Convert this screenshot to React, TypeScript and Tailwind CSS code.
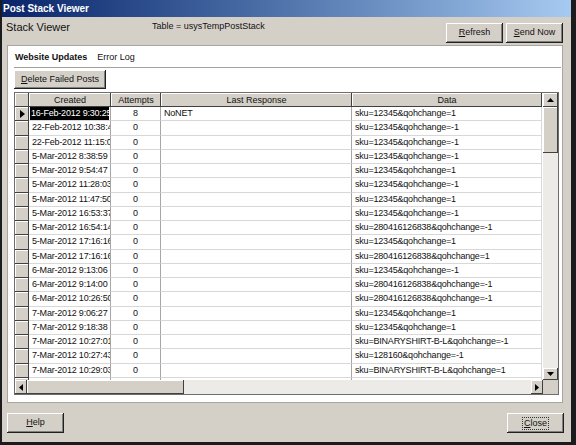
import React from 'react';

const rows = [
  { created: '16-Feb-2012 9:30:25', attempts: '8', response: 'NoNET', data: 'sku=12345&qohchange=1' },
  { created: '22-Feb-2012 10:38:48', attempts: '0', response: '', data: 'sku=12345&qohchange=-1' },
  { created: '22-Feb-2012 11:15:02', attempts: '0', response: '', data: 'sku=12345&qohchange=-1' },
  { created: '5-Mar-2012 8:38:59', attempts: '0', response: '', data: 'sku=12345&qohchange=-1' },
  { created: '5-Mar-2012 9:54:47', attempts: '0', response: '', data: 'sku=12345&qohchange=1' },
  { created: '5-Mar-2012 11:28:03', attempts: '0', response: '', data: 'sku=12345&qohchange=-1' },
  { created: '5-Mar-2012 11:47:50', attempts: '0', response: '', data: 'sku=12345&qohchange=1' },
  { created: '5-Mar-2012 16:53:37', attempts: '0', response: '', data: 'sku=12345&qohchange=-1' },
  { created: '5-Mar-2012 16:54:14', attempts: '0', response: '', data: 'sku=280416126838&qohchange=-1' },
  { created: '5-Mar-2012 17:16:16', attempts: '0', response: '', data: 'sku=12345&qohchange=1' },
  { created: '5-Mar-2012 17:16:16', attempts: '0', response: '', data: 'sku=280416126838&qohchange=1' },
  { created: '6-Mar-2012 9:13:06', attempts: '0', response: '', data: 'sku=12345&qohchange=-1' },
  { created: '6-Mar-2012 9:14:00', attempts: '0', response: '', data: 'sku=280416126838&qohchange=-1' },
  { created: '6-Mar-2012 10:26:50', attempts: '0', response: '', data: 'sku=280416126838&qohchange=-1' },
  { created: '7-Mar-2012 9:06:27', attempts: '0', response: '', data: 'sku=12345&qohchange=1' },
  { created: '7-Mar-2012 9:18:38', attempts: '0', response: '', data: 'sku=12345&qohchange=1' },
  { created: '7-Mar-2012 10:27:01', attempts: '0', response: '', data: 'sku=BINARYSHIRT-B-L&qohchange=-1' },
  { created: '7-Mar-2012 10:27:43', attempts: '0', response: '', data: 'sku=128160&qohchange=-1' },
  { created: '7-Mar-2012 10:29:03', attempts: '0', response: '', data: 'sku=BINARYSHIRT-B-L&qohchange=1' },
  { created: '7-Mar-2012 10:30:35', attempts: '0', response: '', data: 'sku=128160&qohchange=1' },
];

// raised 3d look, windows classic style
const raised =
  'bg-[#d4d0c8] shadow-[inset_-1px_-1px_#202020,inset_1px_1px_#ffffff,inset_-2px_-2px_#808080]';
const thin = 'bg-[#d4d0c8] shadow-[inset_-1px_-1px_#404040,inset_1px_1px_#ffffff]';

const Btn: React.FC<{ label: string; w: string; focus?: boolean }> = ({ label, w, focus }) => (
  <button className={`${raised} ${w} h-[20px] flex items-center justify-center text-[9px] text-[#111]`}>
    <span className={focus ? 'border border-dotted border-[#333] px-[1px] leading-[11px]' : ''}>
      <span className="underline">{label[0]}</span>
      {label.slice(1)}
    </span>
  </button>
);

const Arrow: React.FC<{ dir: 'up' | 'down' | 'left' | 'right' }> = ({ dir }) => {
  const pts = {
    up: '0,4 3.5,0 7,4',
    down: '0,0 3.5,4 7,0',
    left: '4,0 0,3.5 4,7',
    right: '0,0 4,3.5 0,7',
  }[dir];
  const vert = dir === 'up' || dir === 'down';
  return (
    <svg width={vert ? 7 : 4} height={vert ? 4 : 7} viewBox={vert ? '0 0 7 4' : '0 0 4 7'}>
      <polygon points={pts} fill="#000" />
    </svg>
  );
};

const cols = ['w-[14px]', 'w-[82px]', 'w-[50px]', 'w-[191px]', 'w-[190px]'];

export default function App() {
  return (
    <div className="w-[576px] h-[445px] bg-[#d4d0c8] border-l-2 border-r-[5px] border-b-[3px] border-[#1c1c1c] flex flex-col overflow-hidden font-['Liberation_Sans',Arial,sans-serif] text-[#111]">
      {/* Title bar */}
      <div className="h-[17px] shrink-0 bg-gradient-to-r from-[#0a246a] to-[#a6caf0] flex items-center pl-[1px]">
        <span className="text-white font-bold text-[10px]">Post Stack Viewer</span>
      </div>

      {/* Header */}
      <div className="h-[28px] shrink-0 flex items-start pr-[8px]">
        <span className="ml-[4px] mt-[4px] text-[11px] leading-[13px]">Stack Viewer</span>
        <span className="ml-[82px] mt-[4px] text-[9px] leading-[11px]">Table = usysTempPostStack</span>
        <div className="ml-auto mt-[6px] flex gap-[3px]">
          <Btn label="Refresh" w="w-[57px]" />
          <Btn label="Send Now" w="w-[57px]" />
        </div>
      </div>

      {/* White panel */}
      <div className="ml-[5px] mr-[8px] h-[358px] shrink-0 bg-white border border-[#a9a6a0] flex flex-col pl-[6px] pr-[4px]">
        <div className="h-[21px] flex items-center gap-[10px] pl-[1px] pt-[2px] text-[9px]">
          <span className="font-bold">Website Updates</span>
          <span>Error Log</span>
        </div>
        <div className="h-[2px] border-t border-[#a4a19b] border-b border-b-white mr-[-3px]" />
        <div className="mt-[1px] flex">
          <button className={`${raised} w-[92px] h-[19px] flex items-center justify-center text-[9px]`}>
            <span>
              <span className="underline">D</span>elete Failed Posts
            </span>
          </button>
        </div>

        {/* Grid */}
        <div className="mt-[3px] w-[545px] h-[303px] border border-[#6e6e6e] flex flex-col bg-white">
          <div className="flex flex-1 min-h-0">
            <div className="flex-1 overflow-hidden flex flex-col">
              {/* Header row */}
              <div className="flex h-[14px] shrink-0 text-[9px]">
                {['', 'Created', 'Attempts', 'Last Response', 'Data'].map((h, i) => (
                  <div
                    key={i}
                    className={`${cols[i]} ${thin} shrink-0 flex items-center justify-center leading-none`}
                  >
                    {h}
                  </div>
                ))}
              </div>
              {rows.map((r, i) => (
                <div key={i} className="flex h-[14.25px] shrink-0 text-[9px] leading-none tracking-[-0.2px]">
                  <div className={`${cols[0]} ${thin} shrink-0 flex items-center justify-center`}>
                    {i === 0 && (
                      <svg width="5" height="8" viewBox="0 0 5 8">
                        <polygon points="0,0 5,4 0,8" fill="#000" />
                      </svg>
                    )}
                  </div>
                  <div className={`${cols[1]} shrink-0 border-r border-b border-[#a6a6a6] border-b-[#d8d8d8] overflow-hidden whitespace-nowrap`}>
                    {i === 0 ? (
                      <div className="h-full mx-[1px] bg-black text-white flex items-center pl-[1px] overflow-hidden">
                        {r.created}
                      </div>
                    ) : (
                      <div className="h-full flex items-center pl-[3px]">{r.created}</div>
                    )}
                  </div>
                  <div className={`${cols[2]} shrink-0 border-r border-b border-[#a6a6a6] border-b-[#d8d8d8] flex items-center justify-center`}>
                    {r.attempts}
                  </div>
                  <div className={`${cols[3]} shrink-0 border-r border-b border-[#a6a6a6] border-b-[#d8d8d8] flex items-center pl-[3px]`}>
                    {r.response}
                  </div>
                  <div className={`${cols[4]} shrink-0 border-r border-b border-[#d8d8d8] flex items-center pl-[3px] whitespace-nowrap overflow-hidden`}>
                    {r.data}
                  </div>
                </div>
              ))}
            </div>
            {/* Vertical scrollbar */}
            <div className="w-[15px] shrink-0 flex flex-col bg-[#ecebe7]">
              <div className={`${thin} h-[14px] flex items-center justify-center`}>
                <Arrow dir="up" />
              </div>
              <div className={`${thin} h-[46px]`} />
              <div className="flex-1" />
              <div className={`${thin} h-[12px] flex items-center justify-center`}>
                <Arrow dir="down" />
              </div>
            </div>
          </div>
          {/* Horizontal scrollbar */}
          <div className="h-[14px] shrink-0 flex bg-[#ecebe7]">
            <div className={`${thin} w-[12px] flex items-center justify-center`}>
              <Arrow dir="left" />
            </div>
            <div className={`${thin} w-[157px]`} />
            <div className="flex-1" />
            <div className={`${thin} w-[12px] flex items-center justify-center`}>
              <Arrow dir="right" />
            </div>
            <div className="w-[15px] bg-[#d4d0c8]" />
          </div>
        </div>
      </div>

      {/* Footer */}
      <div className="flex mt-[10px] pl-[5px] pr-[7px]">
        <Btn label="Help" w="w-[57px]" />
        <div className="ml-auto">
          <Btn label="Close" w="w-[57px]" focus />
        </div>
      </div>
    </div>
  );
}
